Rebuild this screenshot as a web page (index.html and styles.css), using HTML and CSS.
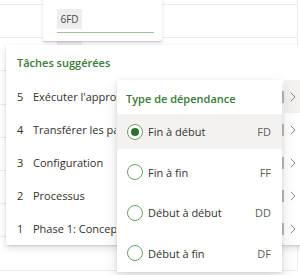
FILE: index.html
```html
<!DOCTYPE html>
<html lang="fr">
<head>
<meta charset="utf-8">
<link rel="stylesheet" href="styles.css">
</head>
<body>
<div class="grid">
  <div class="gl gl-first"></div>
  <div class="gl"></div>
  <div class="gl"></div>
  <div class="gl"></div>
  <div class="gl"></div>
  <div class="gl"></div>
  <div class="gl"></div>
  <div class="gl"></div>
  <div class="gl"></div>
</div>
<div class="cell-peek"></div>
<div class="input-card">
  <div class="input-field"><span class="token">6FD</span></div>
</div>
<div class="panel">
  <div class="panel-title">Tâches suggérées</div>
  <div class="row"><span class="num">5</span><span class="label">Exécuter l'approbation</span><span class="split"><span class="divider"></span><span class="chev hover"><svg width="6" height="10" viewBox="0 0 6 10"><path d="M0.8 0.8 L5 5 L0.8 9.2" fill="none" stroke="#8a8886" stroke-width="1"/></svg></span></span></div>
  <div class="row"><span class="num">4</span><span class="label">Transférer les paramètres</span><span class="split"><span class="divider"></span><span class="chev"><svg width="6" height="10" viewBox="0 0 6 10"><path d="M0.8 0.8 L5 5 L0.8 9.2" fill="none" stroke="#8a8886" stroke-width="1"/></svg></span></span></div>
  <div class="row"><span class="num">3</span><span class="label">Configuration</span><span class="split"><span class="divider"></span><span class="chev"><svg width="6" height="10" viewBox="0 0 6 10"><path d="M0.8 0.8 L5 5 L0.8 9.2" fill="none" stroke="#8a8886" stroke-width="1"/></svg></span></span></div>
  <div class="row"><span class="num">2</span><span class="label">Processus</span><span class="split"><span class="divider"></span><span class="chev"><svg width="6" height="10" viewBox="0 0 6 10"><path d="M0.8 0.8 L5 5 L0.8 9.2" fill="none" stroke="#8a8886" stroke-width="1"/></svg></span></span></div>
  <div class="row"><span class="num">1</span><span class="label">Phase 1: Conception</span><span class="split"><span class="divider"></span><span class="chev"><svg width="6" height="10" viewBox="0 0 6 10"><path d="M0.8 0.8 L5 5 L0.8 9.2" fill="none" stroke="#8a8886" stroke-width="1"/></svg></span></span></div>
</div>
<div class="menu">
  <div class="menu-title">Type de dépendance</div>
  <div class="item selected"><span class="radio checked"></span><span class="item-label">Fin à début</span><span class="key">FD</span></div>
  <div class="item"><span class="radio"></span><span class="item-label">Fin à fin</span><span class="key">FF</span></div>
  <div class="item"><span class="radio"></span><span class="item-label">Début à début</span><span class="key">DD</span></div>
  <div class="item"><span class="radio"></span><span class="item-label">Début à fin</span><span class="key">DF</span></div>
</div>
</body>
</html>
```
FILE: styles.css
```css
html, body {
  margin: 0;
  padding: 0;
  width: 300px;
  height: 275px;
  overflow: hidden;
  background: #ffffff;
  font-family: "Open Sans", "Noto Sans", sans-serif;
  color: #323130;
}

.grid {
  width: 297px;
  border-right: 1px solid #edebe9;
}

.gl {
  box-sizing: border-box;
  height: 33.2px;
  border-bottom: 1px solid #edebe9;
}

.gl-first {
  height: 5px;
}

.cell-peek {
  position: absolute;
  left: 57px;
  top: 41px;
  width: 25px;
  height: 6px;
  background: #f0efee;
}

.input-card {
  position: absolute;
  left: 43px;
  top: -10px;
  width: 119px;
  height: 51px;
  background: #fff;
  border-radius: 2px;
  box-shadow: 0 1.6px 3.6px rgba(0, 0, 0, 0.13), 0 0.3px 0.9px rgba(0, 0, 0, 0.11);
}

.input-field {
  margin: 19px 8px 0 14px;
  height: 23px;
  border-bottom: 1px solid #9cc59a;
  display: flex;
  align-items: flex-start;
}

.token {
  width: 25px;
  height: 20px;
  background: #efeeed;
  font-size: 10px;
  line-height: 20px;
  text-align: center;
  color: #4a4846;
}

.panel {
  position: absolute;
  left: 6px;
  top: 45px;
  width: 300px;
  background: #fff;
  box-shadow: 0 3.2px 7.2px rgba(0, 0, 0, 0.13), 0 0.6px 1.8px rgba(0, 0, 0, 0.11);
}

.panel-title {
  height: 35px;
  padding-left: 11px;
  font-size: 11px;
  font-weight: 600;
  color: #3b7a39;
  line-height: 36px;
}

.row {
  display: flex;
  align-items: center;
  height: 33px;
  font-size: 11px;
}

.num {
  width: 16px;
  padding-left: 11px;
  flex: none;
}

.label {
  flex: 1;
  white-space: nowrap;
}

.label-clip {
  display: block;
  width: 83px;
  overflow: hidden;
}

.label {
  max-width: 83px;
  overflow: hidden;
  margin-right: auto;
}

.split {
  flex: none;
  width: 24px;
  height: 100%;
  display: flex;
  align-items: center;
  margin-left: auto;
}

.divider {
  width: 2px;
  height: 12px;
  background: #bebbb8;
  flex: none;
}

.chev {
  flex: 1;
  height: 100%;
  display: flex;
  align-items: center;
  padding-left: 6px;
}

.chev.hover {
  background: #f3f2f1;
}

.menu {
  position: absolute;
  left: 117px;
  top: 80px;
  width: 165px;
  height: 192px;
  background: #fff;
  box-shadow: 0 6.4px 14.4px rgba(0, 0, 0, 0.13), 0 1.2px 3.6px rgba(0, 0, 0, 0.11);
  display: flex;
  flex-direction: column;
  gap: 5.5px;
}

.menu-title {
  height: 28.5px;
  padding-left: 9px;
  font-size: 11px;
  font-weight: 600;
  color: #3b7a39;
  line-height: 38px;
}

.item {
  height: 35px;
  flex: none;
  display: flex;
  align-items: center;
  padding: 0 11px 0 10px;
  font-size: 11px;
}

.item.selected {
  background: #f3f2f1;
}

.radio {
  box-sizing: border-box;
  width: 16px;
  height: 16px;
  border: 1px solid #6c9f69;
  border-radius: 50%;
  flex: none;
  display: flex;
  align-items: center;
  justify-content: center;
  background: #fff;
}

.radio.checked::after {
  content: "";
  width: 8px;
  height: 8px;
  border-radius: 50%;
  background: #2f6f2d;
}

.item-label {
  flex: 1;
  margin-left: 5px;
}

.key {
  color: #605e5c;
}
```
